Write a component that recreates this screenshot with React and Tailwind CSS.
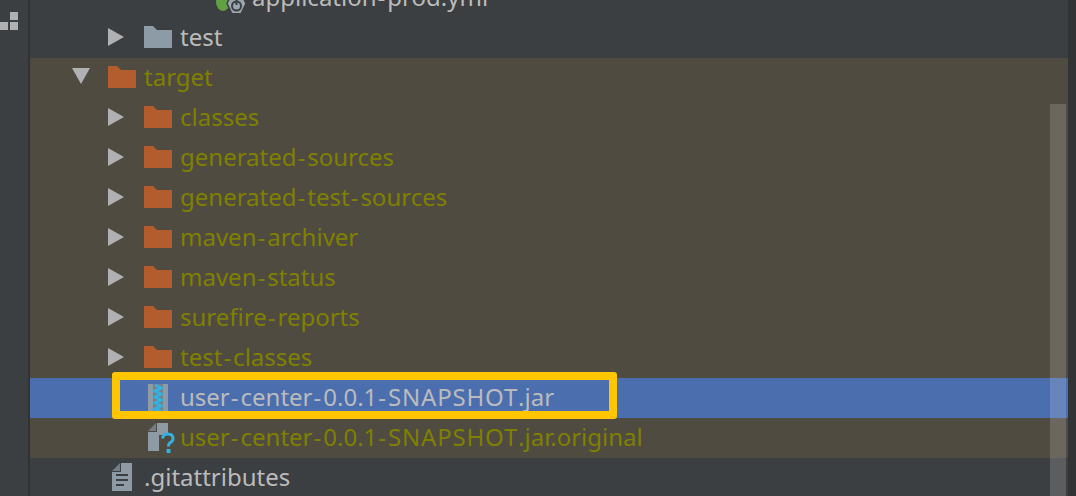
const FONT = "font-['Noto_Sans','Open_Sans',sans-serif]";

function Arrow({ open }) {
  return (
    <svg width="18" height="18" viewBox="0 0 18 18" className="block shrink-0">
      {open ? <polygon points="0,0 18,0 9,16" fill="#afb1b3" /> : <polygon points="0,0 16,9 0,18" fill="#afb1b3" />}
    </svg>
  );
}

function Folder({ color }) {
  return (
    <svg width="28" height="22" viewBox="0 0 28 22" className="block shrink-0">
      <path d="M0 0H9L13 4H28V22H0Z" fill={color} />
    </svg>
  );
}

function JarIcon() {
  return (
    <svg width="20" height="28" viewBox="0 0 20 28" className="block shrink-0 ml-1 mt-[2px]">
      <rect width="20" height="28" fill="#8e9ba5" />
      <rect x="5" width="10" height="28" fill="#75828c" />
      <path d="M7 1L13 4L7 7L13 10L7 13L13 16L7 19L13 22L7 25L13 27" fill="none" stroke="#35b0e0" strokeWidth="3" />
    </svg>
  );
}

function UnknownIcon() {
  return (
    <svg width="28" height="30" viewBox="0 0 28 30" className="block shrink-0 ml-1 mt-[2px]">
      <path d="M0 8L8 0V8Z" fill="#727c83" />
      <path d="M9 0H20V28H0V9H9Z" fill="#8e9ba5" />
      <path d="M11 30V12H28V30Z" fill="#4f4b41" />
      <path d="M14.5 15.5Q15 11 20 11Q25 11 25 15.5Q25 18 22.5 19.5Q20.5 20.5 20.5 23.5" fill="none" stroke="#35b0e0" strokeWidth="3" />
      <rect x="18.5" y="26" width="4" height="4" fill="#35b0e0" />
    </svg>
  );
}

function TextFileIcon() {
  return (
    <svg width="20" height="28" viewBox="0 0 20 28" className="block shrink-0 ml-1">
      <path d="M0 8L8 0V8Z" fill="#727c83" />
      <path d="M9 0H20V28H0V9H9Z" fill="#8e9ba5" />
      <rect x="4" y="11" width="12" height="2" fill="#3c3f41" />
      <rect x="4" y="16" width="12" height="2" fill="#3c3f41" />
      <rect x="4" y="21" width="8" height="2" fill="#3c3f41" />
    </svg>
  );
}

function SpringIcon() {
  return (
    <svg width="32" height="32" viewBox="0 0 32 32" className="block shrink-0">
      <ellipse cx="7" cy="21" rx="7" ry="9" fill="#62a044" />
      <path d="M16 12H25L30 22.5L25 33H16L11 22.5Z" fill="#9aa7b0" stroke="#3c3f41" strokeWidth="1.5" />
      <circle cx="20.5" cy="25" r="4.5" fill="none" stroke="#3c3f41" strokeWidth="2" />
      <rect x="19.5" y="18" width="2" height="6" fill="#3c3f41" />
    </svg>
  );
}

function Label({ text, tone }) {
  const parts = text.split(/(-|SNAPSHOT)/);
  return (
    <span className={`text-[24px] leading-10 whitespace-pre ${tone}`}>
      {parts.map((p, i) => {
        if (p === "-") return <span key={i} className="pl-[1px] tracking-[2px]">-</span>;
        if (p === "SNAPSHOT") return <span key={i} className="tracking-[0.8px]">SNAPSHOT</span>;
        return p;
      })}
    </span>
  );
}

function Row({ pad, arrow, icon, label, tone, bg }) {
  return (
    <div className={`flex items-center h-10 shrink-0 pb-[2px] ${pad} ${bg || ""}`}>
      <div className="w-9 shrink-0 flex items-center">{arrow}</div>
      <div className="w-9 shrink-0 flex items-center">{icon}</div>
      <Label text={label} tone={tone} />
    </div>
  );
}

const OLIVE = "text-[#808000]";
const LIGHT = "text-[#bbbbbb]";
const orange = "#b35c2e";
const children = ["classes", "generated-sources", "generated-test-sources", "maven-archiver", "maven-status", "surefire-reports", "test-classes"];

export default function App() {
  return (
    <div className={`flex w-[1076px] h-[496px] overflow-hidden bg-[#3c3f41] ${FONT}`}>
      <aside className="w-[30px] shrink-0 border-r-2 border-[#323232] pt-3">
        <div className="flex flex-col gap-[2px] items-end w-[18px]">
          <div className="w-2 h-2 bg-[#afb1b3]" />
          <div className="flex gap-[2px]">
            <div className="w-2 h-2 bg-[#afb1b3]" />
            <div className="w-2 h-2 bg-[#afb1b3]" />
          </div>
        </div>
      </aside>
      <main className="relative flex-1 flex flex-col -mt-[22px]">
        <Row pad="pl-[150px]" icon={<SpringIcon />} label="application-prod.yml" tone={LIGHT} />
        <Row pad="pl-[78px]" arrow={<Arrow />} icon={<Folder color="#8c9ba5" />} label="test" tone={LIGHT} />
        <div className="flex flex-col bg-[#4f4b41]">
          <Row pad="pl-[42px]" arrow={<Arrow open />} icon={<Folder color={orange} />} label="target" tone={OLIVE} />
          {children.map((c) => (
            <Row key={c} pad="pl-[78px]" arrow={<Arrow />} icon={<Folder color={orange} />} label={c} tone={OLIVE} />
          ))}
          <Row pad="pl-[78px]" bg="bg-[#4b6eaf]" icon={<JarIcon />} label="user-center-0.0.1-SNAPSHOT.jar" tone={LIGHT} />
          <Row pad="pl-[78px]" icon={<UnknownIcon />} label="user-center-0.0.1-SNAPSHOT.jar.original" tone={OLIVE} />
        </div>
        <Row pad="pl-[42px]" icon={<TextFileIcon />} label=".gitattributes" tone={LIGHT} />
        <div className="absolute left-[1020px] top-[126px] w-4 h-[392px] bg-white/16 pointer-events-none" />
        <div className="absolute left-[82px] top-[394px] w-[505px] h-[47px] border-8 border-[#ffc600] rounded-[3px] pointer-events-none" />
      </main>
      <div className="w-2 shrink-0 bg-[#313335]" />
    </div>
  );
}
